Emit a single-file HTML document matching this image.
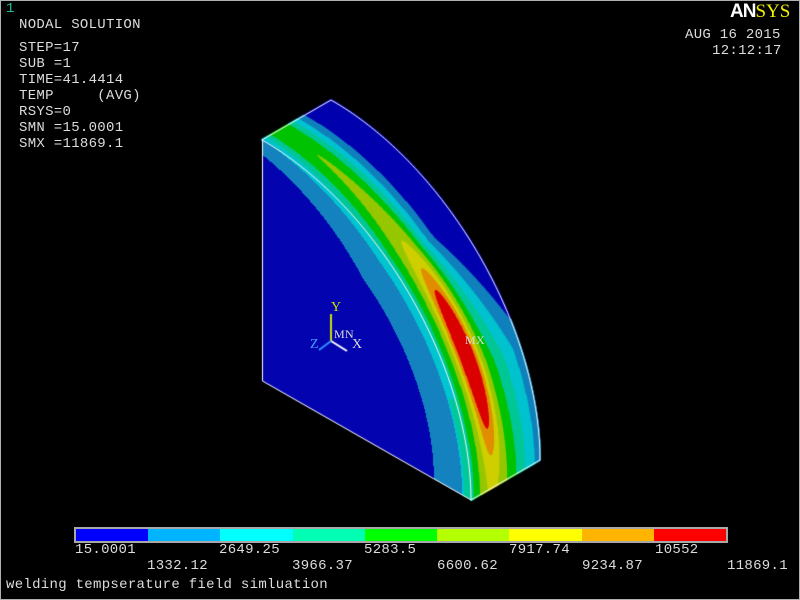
<!DOCTYPE html>
<html><head><meta charset="utf-8"><style>
html,body{margin:0;padding:0;background:#000;}
#w{position:relative;width:800px;height:600px;background:#000;overflow:hidden;box-sizing:border-box;border:1px solid #b0b0b0;}
.t{position:absolute;font-family:"Liberation Mono",monospace;font-size:14px;color:#dcdcdc;white-space:pre;line-height:16px;letter-spacing:0.3px;}
canvas{position:absolute;left:0;top:0;}
.seg{position:absolute;top:0;height:12px;}
</style></head><body><div id="w">
<canvas id="c" width="800" height="600"></canvas>
<div class="t" style="left:5px;top:0px;color:#20c0a0;">1</div>
<div class="t" style="left:18px;top:16px;">NODAL SOLUTION</div>
<div class="t" style="left:18px;top:39px;">STEP=17
SUB =1
TIME=41.4414
TEMP     (AVG)
RSYS=0
SMN =15.0001
SMX =11869.1</div>
<div style="position:absolute;left:729px;top:0px;font-family:'Liberation Sans',sans-serif;font-weight:bold;font-size:19px;color:#fff;letter-spacing:-1px;">AN<span style="font-family:'Liberation Serif',serif;font-weight:normal;color:#f0f000;letter-spacing:0">SYS</span></div>
<div class="t" style="left:684px;top:26px;">AUG 16 2015</div>
<div class="t" style="left:711px;top:42px;">12:12:17</div>
<div class="t" style="left:330px;top:299px;color:#c8e000;font-family:'Liberation Serif',serif;">Y</div>
<div class="t" style="left:333px;top:325px;font-family:'Liberation Serif',serif;font-size:12px;">MN</div>
<div class="t" style="left:351px;top:336px;font-family:'Liberation Serif',serif;">X</div>
<div class="t" style="left:309px;top:336px;color:#40a0ff;font-family:'Liberation Serif',serif;">Z</div>
<div class="t" style="left:464px;top:331px;font-family:'Liberation Serif',serif;font-size:12px;">MX</div>
<div style="position:absolute;left:73px;top:526px;width:650px;height:12px;border:2px solid #a8a8a8;">
<div class="seg" style="left:0;width:72px;background:#0000ff"></div>
<div class="seg" style="left:72px;width:72px;background:#00b4ff"></div>
<div class="seg" style="left:144px;width:73px;background:#00ffff"></div>
<div class="seg" style="left:217px;width:72px;background:#00ffb4"></div>
<div class="seg" style="left:289px;width:72px;background:#00ff00"></div>
<div class="seg" style="left:361px;width:72px;background:#b4ff00"></div>
<div class="seg" style="left:433px;width:73px;background:#ffff00"></div>
<div class="seg" style="left:506px;width:72px;background:#ffb400"></div>
<div class="seg" style="left:578px;width:72px;background:#ff0000"></div>
</div>
<div class="t" style="left:74px;top:541px;">15.0001</div>
<div class="t" style="left:218px;top:541px;">2649.25</div>
<div class="t" style="left:363px;top:541px;">5283.5</div>
<div class="t" style="left:508px;top:541px;">7917.74</div>
<div class="t" style="left:654px;top:541px;">10552</div>
<div class="t" style="left:146px;top:557px;">1332.12</div>
<div class="t" style="left:291px;top:557px;">3966.37</div>
<div class="t" style="left:436px;top:557px;">6600.62</div>
<div class="t" style="left:581px;top:557px;">9234.87</div>
<div class="t" style="left:726px;top:557px;">11869.1</div>
<div class="t" style="left:5px;top:576px;">welding tempserature field simluation</div>
</div>
<script>
var c=document.getElementById('c').getContext('2d');
var cols=['#0303b0','#1482be','#00c4d0','#00c898','#00c400','#98c800','#d0d000','#e09000','#dc0000'];
var C=[261,380],A=[209,119],B=[0,-241],D=[69,-40];
function F(t,u){var a=Math.sin(t*Math.PI/2)*u,b=Math.cos(t*Math.PI/2)*u;return [C[0]+a*A[0]+b*B[0],C[1]+a*A[1]+b*B[1]];}
function F0(t){return 1.9+1.5*Math.min(1,t/0.4);}
function cl(x){return Math.max(0,Math.min(1,x));}
function sv(t,s){
var sc=0.25+0.05*t;
var Pk=4.9+0.8*t;
var f0=F0(t);
var base;
if(s<sc){base=f0+(Pk-f0)*Math.sin(Math.PI/2*s/sc);}
else{var w=0.29+0.33*cl((t-0.42)/0.3);base=Pk*Math.exp(-Math.pow((s-sc)/w,2));}
var ds=s-sc-0.04;
return base+4.6*Math.exp(-Math.pow((t-0.68)/0.22,2)-Math.pow(ds/0.13,2));}
function ci(v){var i=Math.floor(v);return Math.max(0,Math.min(8,i));}
var NT=1400,NS=160;
for(var i=0;i<=NT;i++){var t=i/NT;var p=F(t,1);
for(var j=0;j<=NS;j++){var s=j/NS;c.fillStyle=cols[ci(sv(t,s))];
c.fillRect(p[0]+s*D[0]-0.9,p[1]+s*D[1]-0.9,1.8,1.8);}}
var img=c.getImageData(0,0,800,600),d=img.data;
function hex(h){return [parseInt(h.substr(1,2),16),parseInt(h.substr(3,2),16),parseInt(h.substr(5,2),16)];}
var rc=cols.map(hex);
for(var y=130;y<510;y++)for(var x=255;x<480;x++){
var dx=x-C[0],dy=y-C[1];var a=dx/A[0];var b=(dy-a*A[1])/B[1];
if(a<0||b<0)continue;var u=Math.sqrt(a*a+b*b);if(u>1)continue;
var t=Math.atan2(a,b)/(Math.PI/2);var f0=F0(t);var dd=1-u;
var L=0.06+0.12*Math.min(1,t/0.4);
var k=0;
if(f0>3.1&&t>0.75&&dd<0.035)k=3;
else if(f0>2&&dd<0.045*(f0-2)/1.4)k=2;
else if(dd<L)k=1;
var o=(y*800+x)*4;d[o]=rc[k][0];d[o+1]=rc[k][1];d[o+2]=rc[k][2];d[o+3]=255;}
c.putImageData(img,0,0);
c.strokeStyle='#ffffff';c.lineWidth=1;
function arc(off){c.beginPath();for(var i=0;i<=200;i++){var p=F(i/200,1);var q=[p[0]+off[0],p[1]+off[1]];if(i)c.lineTo(q[0],q[1]);else c.moveTo(q[0],q[1]);}c.stroke();}
arc([0,0]);arc(D);
c.beginPath();c.moveTo(261.5,139);c.lineTo(261.5,380);c.lineTo(470,499);c.lineTo(470+69,499-40);c.stroke();
c.beginPath();c.moveTo(261,139);c.lineTo(330,99);c.stroke();
c.lineWidth=2;
c.strokeStyle='#c8e000';c.beginPath();c.moveTo(330,340);c.lineTo(330,313);c.stroke();
c.strokeStyle='#ffffff';c.beginPath();c.moveTo(330,340);c.lineTo(346,350);c.stroke();
c.strokeStyle='#3090ff';c.beginPath();c.moveTo(330,340);c.lineTo(318,349);c.stroke();
</script>
</body></html>
